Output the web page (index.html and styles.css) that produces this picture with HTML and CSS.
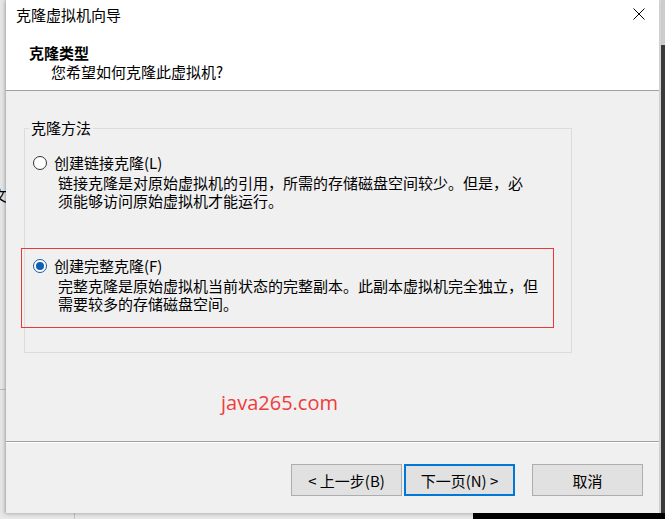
FILE: index.html
```html
<!DOCTYPE html>
<html lang="zh-CN">
<head>
<meta charset="utf-8">
<title>克隆虚拟机向导</title>
<link rel="stylesheet" href="styles.css">
</head>
<body>
<div class="desktop">
  <span class="bg-glyph">文</span>
  <span class="bg-tick"></span>
  <div class="right-strip"></div>
  <div class="bottom-strip"><span class="bottom-line"></span><span class="bottom-dark"></span></div>

  <div class="dialog">
    <div class="top">
      <div class="titlebar">
        <span class="title">克隆虚拟机向导</span>
        <svg class="close" width="12" height="12" viewBox="0 0 12 12"><path d="M0.5 0.5 L11.5 11.5 M11.5 0.5 L0.5 11.5" stroke="#000" stroke-width="1" fill="none"/></svg>
      </div>
      <div class="header">
        <div class="h-title">克隆类型</div>
        <div class="h-sub">您希望如何克隆此虚拟机?</div>
      </div>
    </div>

    <div class="content">
      <fieldset class="group">
        <legend class="legend">克隆方法</legend>
        <div class="option">
          <div class="opt-row"><span class="radio"></span><span class="opt-label">创建链接克隆(L)</span></div>
          <div class="opt-desc">链接克隆是对原始虚拟机的引用，所需的存储磁盘空间较少。但是，必<br>须能够访问原始虚拟机才能运行。</div>
        </div>
        <div class="option option-marked">
          <div class="opt-row"><span class="radio radio-on"></span><span class="opt-label">创建完整克隆(F)</span></div>
          <div class="opt-desc">完整克隆是原始虚拟机当前状态的完整副本。此副本虚拟机完全独立，但<br>需要较多的存储磁盘空间。</div>
        </div>
      </fieldset>
      <div class="watermark">java265.com</div>
    </div>

    <div class="footer">
      <button class="btn">&lt; 上一步(B)</button>
      <button class="btn btn-default">下一页(N) &gt;</button>
      <button class="btn btn-cancel">取消</button>
    </div>
  </div>
</div>
</body>
</html>
```

FILE: styles.css
```css
html, body {
  margin: 0;
  padding: 0;
}
body {
  width: 665px;
  height: 519px;
  overflow: hidden;
  background: #e9e9e9;
  font-family: "Noto Sans CJK SC", "Noto Sans", sans-serif;
  font-size: 15px;
  color: #000;
}
.desktop {
  position: relative;
  width: 665px;
  height: 519px;
  background: linear-gradient(to right, #e6e6e6 0, #e6e6e6 4px, #d6d6d6 6px);
}
.bg-glyph {
  position: absolute;
  left: -8px;
  top: 186px;
  font-size: 15px;
  line-height: 18px;
  color: #000;
}
.bg-tick {
  position: absolute;
  left: 0;
  top: 389px;
  width: 5px;
  height: 1px;
  background: #b8b8b8;
}
.right-strip {
  position: absolute;
  left: 659px;
  top: 0;
  width: 6px;
  height: 519px;
  box-sizing: border-box;
  border-left: 2px solid #dcdcdc;
  background: linear-gradient(to bottom, #cdcdcd 0, #cdcdcd 45px, #3a3a3a 45px);
}
.bottom-strip {
  position: absolute;
  left: 0;
  top: 513px;
  width: 665px;
  height: 6px;
  background: #e8e8e8;
}
.bottom-line {
  position: absolute;
  left: 74px;
  top: 0;
  width: 1px;
  height: 6px;
  background: #c4c4c4;
}
.bottom-dark {
  position: absolute;
  left: 473px;
  top: 0;
  width: 192px;
  height: 6px;
  background: #000;
}

.dialog {
  position: absolute;
  left: 6px;
  top: 0;
  width: 653px;
  height: 513px;
  display: flex;
  flex-direction: column;
  background: #f0f0f0;
  box-shadow: -1px 1px 4px rgba(0, 0, 0, 0.25);
}

.top {
  height: 90px;
  background: #fff;
  border-bottom: 1px solid #a0a0a0;
}
.titlebar {
  height: 30px;
  display: flex;
  align-items: flex-start;
  justify-content: space-between;
  padding: 0 14px 0 10px;
}
.title {
  line-height: 30px;
}
.close {
  margin-top: 8px;
  display: block;
}
.header {
  padding-top: 14px;
}
.h-title {
  padding-left: 23px;
  font-weight: bold;
  line-height: 18px;
}
.h-sub {
  padding-left: 45px;
  line-height: 18px;
  margin-top: 1px;
}

.content {
  height: 350px;
  background: #f0f0f0;
}
.group {
  margin: 29px 0 0 18px;
  width: 548px;
  box-sizing: border-box;
  padding: 9px 0 24px 0;
  border: 1px solid #dcdcdc;
  min-width: 0;
}
.legend {
  margin-left: 4px;
  padding: 0 2px;
  line-height: 16px;
}
.option {
  margin-left: -4px;
  width: 533px;
  box-sizing: border-box;
  border: 1px solid transparent;
  padding: 8px 0 14px 11px;
}
.option-marked {
  margin-top: 23px;
  border-color: #e63a3a;
}
.opt-row {
  display: flex;
  align-items: center;
  height: 18px;
}
.radio {
  width: 14px;
  height: 14px;
  box-sizing: border-box;
  border: 1px solid #333;
  border-radius: 50%;
  background: #fff;
  margin-right: 7px;
  display: flex;
  align-items: center;
  justify-content: center;
}
.radio-on {
  border-color: #1c5aa0;
}
.radio-on::after {
  content: "";
  width: 8px;
  height: 8px;
  border-radius: 50%;
  background: #0f5fb0;
}
.opt-label {
  line-height: 18px;
}
.opt-desc {
  margin-top: 2px;
  padding-left: 25px;
  line-height: 18px;
}
.watermark {
  margin: 38px 0 0 215px;
  font-family: "Open Sans", "Noto Sans", sans-serif;
  font-size: 20px;
  line-height: 24px;
  color: #f03c3c;
}

.footer {
  flex: 1;
  border-top: 1px solid #a0a0a0;
  box-shadow: inset 0 1px 0 #fff;
  display: flex;
  align-items: flex-start;
  padding: 22px 16px 0 0;
  justify-content: flex-end;
}
.btn {
  width: 111px;
  height: 32px;
  box-sizing: border-box;
  background: #e1e1e1;
  border: 1px solid #adadad;
  font-family: "Noto Sans CJK SC", "Noto Sans", sans-serif;
  font-size: 15px;
  color: #000;
  padding: 0;
  margin: 0;
}
.btn-default {
  border: 2px solid #0078d7;
  margin-left: 2px;
}
.btn-cancel {
  margin-left: 17px;
}
```
